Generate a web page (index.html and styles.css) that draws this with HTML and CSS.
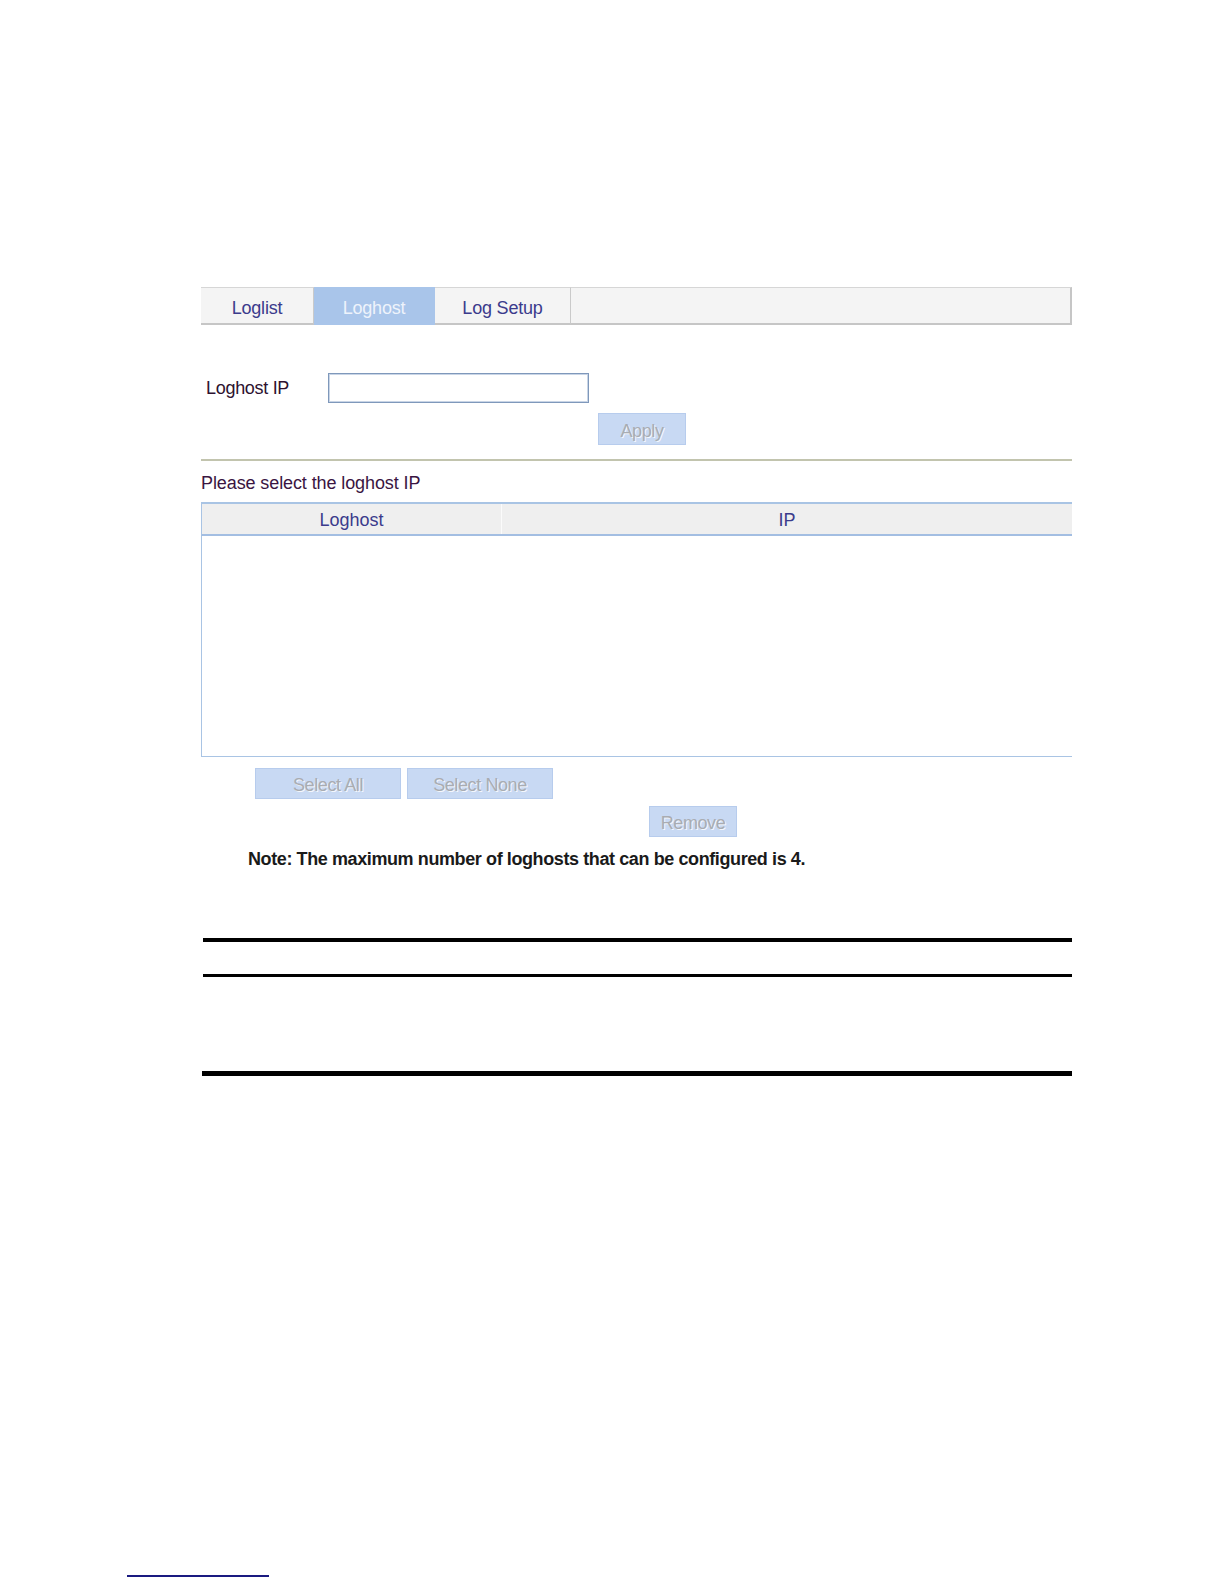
FILE: index.html
```html
<!DOCTYPE html>
<html lang="en">
<head>
<meta charset="utf-8">
<title>Loghost</title>
<link rel="stylesheet" href="styles.css">
</head>
<body>
<div class="page">
  <div class="tabs">
    <div class="tab tab-loglist">Loglist</div>
    <div class="tab tab-loghost active">Loghost</div>
    <div class="tab tab-setup">Log Setup</div>
    <div class="tab-fill"></div>
  </div>

  <div class="field-row">
    <label class="field-label" for="ip">Loghost IP</label>
    <input class="field-input" id="ip" type="text">
  </div>
  <div class="apply-row">
    <span class="btn btn-apply">Apply</span>
  </div>

  <div class="sep"></div>

  <div class="caption">Please select the loghost IP</div>
  <div class="grid">
    <div class="grid-head">
      <div class="col col-host">Loghost</div>
      <div class="col col-ip">IP</div>
    </div>
    <div class="grid-body"></div>
  </div>

  <div class="select-row">
    <span class="btn btn-wide">Select All</span>
    <span class="btn btn-wide">Select None</span>
  </div>
  <div class="remove-row">
    <span class="btn btn-remove">Remove</span>
  </div>

  <p class="note">Note: The maximum number of loghosts that can be configured is 4.</p>

  <div class="rule rule-1"></div>
  <div class="rule rule-2"></div>
  <div class="rule rule-3"></div>
</div>
<div class="footer-rule"></div>
</body>
</html>
```

FILE: styles.css
```css
html, body {
  margin: 0;
  padding: 0;
  background: #ffffff;
}

body {
  font-family: "Liberation Sans", Arial, sans-serif;
  font-size: 18px;
}

.page {
  width: 871px;
  margin-left: 201px;
  padding-top: 287px;
}

/* Tabs */
.tabs {
  display: flex;
  height: 38px;
}

.tab {
  box-sizing: border-box;
  height: 38px;
  padding-top: 6px;
  line-height: 29px;
  text-align: center;
  color: #3b3b8c;
  background: #f4f4f4;
  border-top: 1px solid #d6d6d6;
  border-bottom: 2px solid #c6c6c6;
  border-right: 1px solid #cacaca;
  letter-spacing: -0.2px;
}

.tab-loglist { width: 113px; }
.tab-loghost { width: 121px; }
.tab-setup { width: 136px; }

.tab.active {
  background: #a9c5ea;
  color: #eef3fb;
  border-top-color: #a9c5ea;
  border-bottom-color: #a9c5ea;
  border-right-color: #a9c5ea;
}

.tab-fill {
  flex: 1;
  box-sizing: border-box;
  height: 38px;
  background: #f4f4f4;
  border-top: 1px solid #d6d6d6;
  border-bottom: 2px solid #c6c6c6;
  border-right: 2px solid #c6c6c6;
}

/* Form */
.field-row {
  display: flex;
  align-items: center;
  margin-top: 48px;
  height: 30px;
}

.field-label {
  width: 127px;
  box-sizing: border-box;
  padding-left: 5px;
  color: #2d1230;
  letter-spacing: -0.3px;
}

.field-input {
  box-sizing: border-box;
  width: 261px;
  height: 30px;
  margin: 0;
  padding: 0 4px;
  border: 1px solid #7f98bb;
  box-shadow: inset 0 0 0 1px #c9d5e6;
  background: #ffffff;
  outline: none;
}

.apply-row {
  margin-top: 10px;
  padding-left: 397px;
  height: 32px;
}

.btn {
  display: inline-block;
  box-sizing: border-box;
  height: 31px;
  padding-top: 4px;
  line-height: 25px;
  text-align: center;
  background: #c8d9f3;
  border: 1px solid #b7cced;
  color: #a9acb2;
  text-shadow: 1px 1px 0 #f4f7fc;
  letter-spacing: -0.4px;
}

.btn-apply {
  width: 88px;
  height: 32px;
  line-height: 26px;
}

.sep {
  margin-top: 14px;
  height: 0;
  border-top: 2px solid #c2c4ae;
}

.caption {
  margin-top: 11px;
  line-height: 22px;
  color: #3a1542;
  letter-spacing: -0.1px;
}

/* Grid */
.grid {
  margin-top: 8px;
}

.grid-head {
  display: flex;
  box-sizing: border-box;
  height: 34px;
  background: #efefef;
  border-top: 2px solid #a9c4e4;
  border-bottom: 2px solid #a3bee2;
  border-left: 1px solid #a9c4e4;
}

.col {
  padding-top: 2px;
  line-height: 28px;
  text-align: center;
  color: #3b3b8c;
}

.col-host {
  width: 299px;
  border-right: 1px solid #fbfbfb;
}

.col-ip {
  flex: 1;
}

.grid-body {
  box-sizing: border-box;
  height: 221px;
  border-left: 1px solid #a9c4e4;
  border-bottom: 1px solid #a9c4e4;
}

.select-row {
  display: flex;
  gap: 6px;
  margin-top: 11px;
  padding-left: 54px;
}

.btn-wide {
  width: 146px;
}

.remove-row {
  margin-top: 7px;
  padding-left: 448px;
}

.btn-remove {
  width: 88px;
}

.note {
  margin: 11px 0 0 47px;
  line-height: 22px;
  font-weight: bold;
  color: #1a1a1a;
  letter-spacing: -0.4px;
}

/* Black rules */
.rule {
  background: #000000;
}

.rule-1 {
  margin-top: 68px;
  margin-left: 2px;
  height: 4px;
}

.rule-2 {
  margin-top: 32px;
  margin-left: 2px;
  height: 3px;
}

.rule-3 {
  margin-top: 94px;
  margin-left: 1px;
  height: 5px;
}

.footer-rule {
  margin-top: 499px;
  margin-left: 127px;
  width: 142px;
  height: 2px;
  background: #1a1a80;
}
```
